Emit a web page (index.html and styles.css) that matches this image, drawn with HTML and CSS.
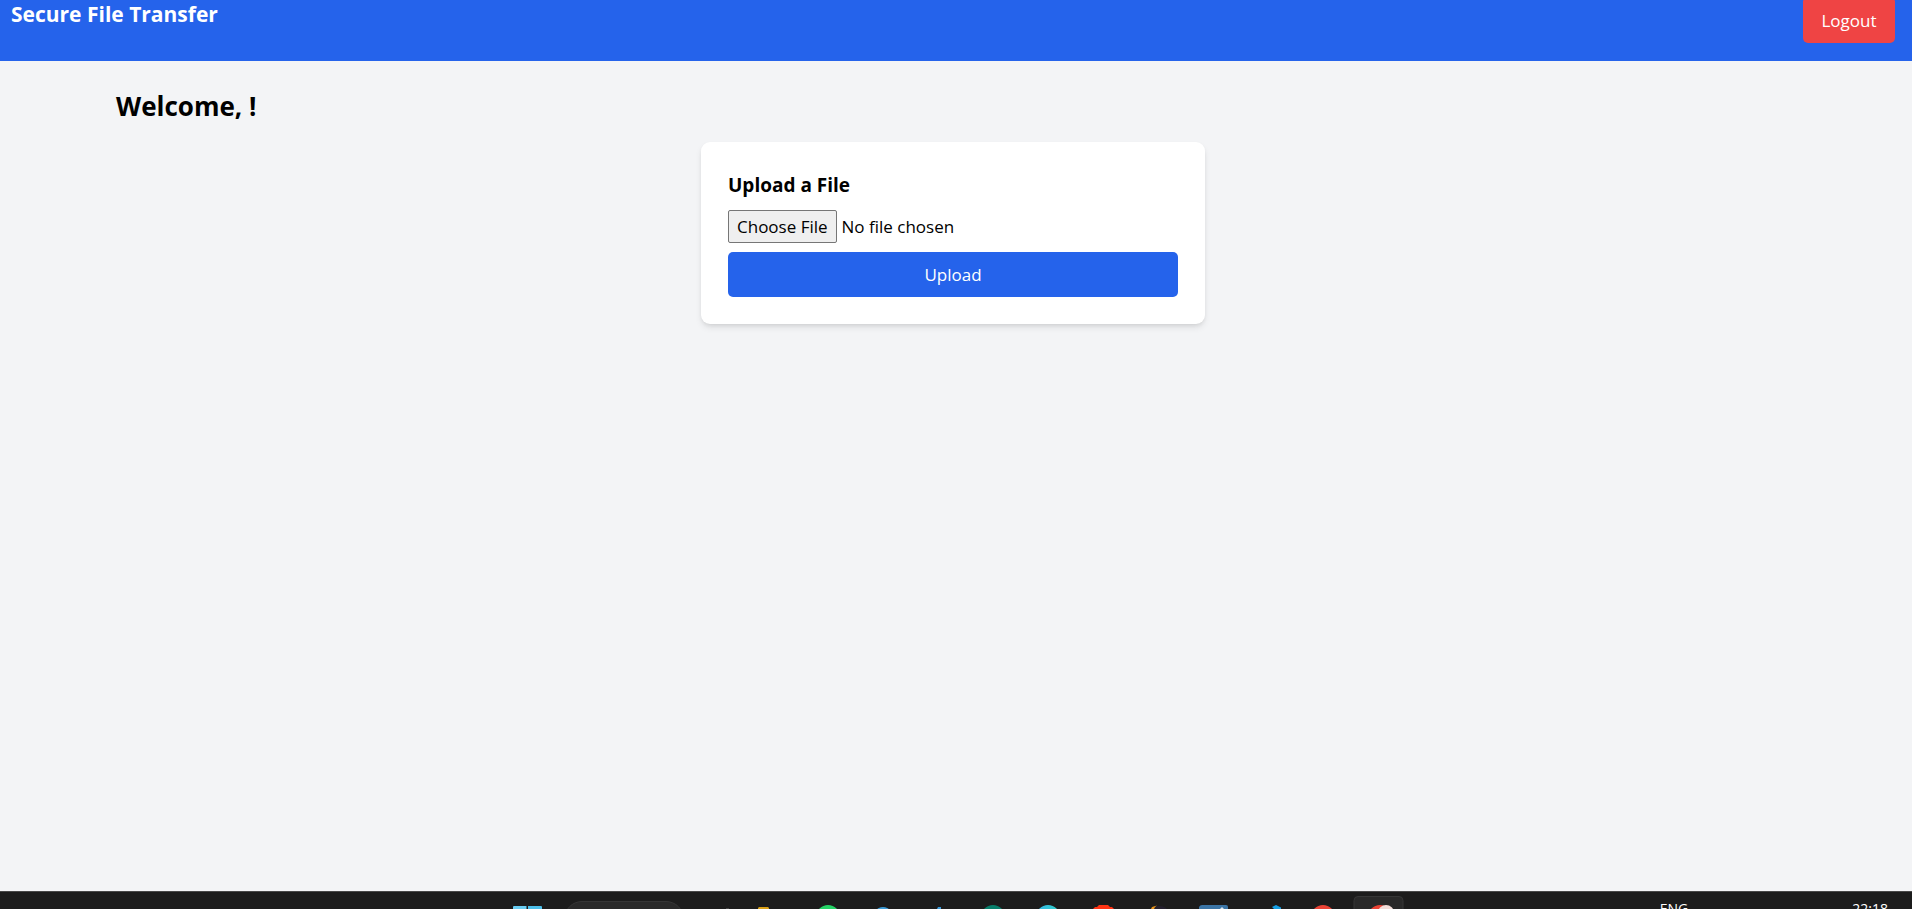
FILE: index.html
```html
<!DOCTYPE html>
<html lang="en">
<head>
<meta charset="utf-8">
<title>Secure File Transfer</title>
<link rel="stylesheet" href="styles.css">
</head>
<body>
<header class="navbar">
  <h1 class="brand">Secure File Transfer</h1>
  <button class="logout" type="button">Logout</button>
</header>
<main class="content">
  <h2 class="welcome">Welcome, !</h2>
  <form class="card">
    <h3 class="card-title" id="upload-title">Upload a File</h3>
    <input class="file" type="file" aria-labelledby="upload-title">
    <button class="upload" type="button">Upload</button>
  </form>
</main>
<footer class="taskbar">
  <div class="apps">
    <button class="app" type="button" aria-label="Start"><svg viewBox="0 0 55 18"><path d="M14 16Q14 15 15 15H27.500V18H14Z" fill="#69cdf2"/><path d="M29 15H42Q43 15 43 16V18H29Z" fill="#4cbfea"/></svg></button>
    <button class="search" type="button" aria-label="Search"></button>
    <button class="app" type="button" aria-label="Task view"><svg viewBox="0 0 55 18"><rect x="35" y="17" width="3" height="1" fill="#444"/></svg></button>
    <button class="app" type="button" aria-label="Files"><svg viewBox="0 0 55 18"><path d="M12 18V17L13 16H22L23 17V18Z" fill="#d9a016"/></svg></button>
    <button class="app" type="button" aria-label="Messages"><svg viewBox="0 0 55 18"><circle cx="27" cy="26" r="12" fill="#25d366"/></svg></button>
    <button class="app" type="button" aria-label="Browser"><svg viewBox="0 0 55 18"><ellipse cx="27" cy="19" rx="6" ry="3" fill="#3c9bd6"/></svg></button>
    <button class="app" type="button" aria-label="Editor"><svg viewBox="0 0 55 18"><path d="M26 18L27 16H30V18Z" fill="#3b9bdc"/></svg></button>
    <button class="app" type="button" aria-label="Development tools"><svg viewBox="0 0 55 18"><circle cx="27" cy="26" r="12" fill="#087f6b"/></svg></button>
    <button class="app" type="button" aria-label="Design"><svg viewBox="0 0 55 18"><defs><linearGradient id="teal"><stop stop-color="#35b6e8"/><stop offset="1" stop-color="#31cfc5"/></linearGradient></defs><circle cx="27" cy="26" r="12" fill="url(#teal)"/></svg></button>
    <button class="app" type="button" aria-label="Private browser"><svg viewBox="0 0 55 18"><path d="M17 18L19 16H21L23 14H32L34 16H36L38 18Z" fill="#ff3414"/></svg></button>
    <button class="app" type="button" aria-label="Development environment"><svg viewBox="0 0 55 18"><ellipse cx="28" cy="19" rx="8" ry="4" fill="#24202e"/><path d="M20 18L21 16L26 14.500L24 16L23 18Z" fill="#e9951b"/></svg></button>
    <button class="app" type="button" aria-label="Database"><svg viewBox="0 0 55 18"><path d="M13 18V16Q14 14 16 14H40Q42 14 42 16V18Z" fill="#3b75a6"/><path d="M34 18L36 16L38 18Z" fill="#d9e5ee"/></svg></button>
    <button class="app" type="button" aria-label="Code"><svg viewBox="0 0 55 18"><path d="M31 16L35 14L40 16.500V18H33Z" fill="#169fe4"/></svg></button>
    <button class="app" type="button" aria-label="Web"><svg viewBox="0 0 55 18"><circle cx="27" cy="26" r="12" fill="#ea4335"/></svg></button>
    <button class="app" type="button" aria-label="Web, active"><svg viewBox="0 0 55 18"><rect x="3" y="5.500" width="49" height="30" rx="4" fill="#292929" stroke="#363636"/><circle cx="29" cy="26" r="12" fill="#ea4335"/><circle cx="35" cy="22" r="8" fill="#f2ddd8"/></svg></button>
  </div>
  <div class="tray"><span>ENG</span><time>22:18</time></div>
</footer>
</body>
</html>
```
FILE: styles.css
```css
* { box-sizing: border-box; }
body {
  margin: 0;
  min-height: 100vh;
  display: flex;
  flex-direction: column;
  background: #f3f4f6;
  color: #000;
  font-family: "Segoe UI", "Open Sans", "Noto Sans", sans-serif;
  font-size: 17px;
  line-height: 27px;
}
h1, h2, h3 { margin: 0; }
button { font: inherit; border: 0; cursor: pointer; }
.navbar {
  display: flex;
  justify-content: space-between;
  align-items: flex-start;
  padding: 0 17px 18px 11px;
  background: #2563eb;
  color: #fff;
}
.brand { font-size: 21px; line-height: 28px; font-weight: 700; }
.logout {
  min-width: 92px;
  padding: 7px 16px 9px;
  border-radius: 1px 1px 5px 5px;
  background: #ef4444;
  color: #fff;
}
.content {
  flex: 1;
  width: 100%;
  max-width: 1734px;
  margin: 0 auto;
  padding: 27px 33px 27px 27px;
}
.welcome { font-size: 26px; line-height: 36px; font-weight: 700; margin-bottom: 18px; }
.card {
  display: flex;
  flex-direction: column;
  gap: 9px;
  max-width: 504px;
  margin: 0 auto;
  padding: 27px;
  border-radius: 9px;
  background: #fff;
  box-shadow: 0 4px 7px -1px rgba(0, 0, 0, .1), 0 2px 5px -2px rgba(0, 0, 0, .1);
}
.card-title { font-size: 19px; line-height: 32px; font-weight: 700; }
.file { width: 100%; font: inherit; }
.file::file-selector-button {
  height: 33px;
  padding: 0 8px;
  margin-right: 5px;
  border: 1px solid #767676;
  border-radius: 2px;
  background: #efefef;
  color: #000;
  font: inherit;
}
.upload {
  padding: 9px 18px;
  border-radius: 5px;
  background: #2563eb;
  color: #fff;
}
.taskbar {
  display: grid;
  grid-template-columns: 1fr auto 1fr;
  height: 18px;
  padding-right: 8px;
  overflow: hidden;
  background: #1c1c1c;
  box-shadow: inset 0 1px #484848;
  color: #fff;
}
.apps { grid-column: 2; display: flex; }
.app { width: 55px; height: 18px; padding: 0; background: none; }
.app svg { display: block; width: 55px; height: 18px; }
.search {
  width: 120px;
  height: 36px;
  margin: 10px 7px 0 10px;
  border: 1px solid #353535;
  border-radius: 18px;
  background: #292929;
}
.tray {
  display: flex;
  justify-content: flex-end;
  gap: 164px;
  padding: 9px 16px 0 0;
  font-size: 14px;
  line-height: 18px;
}
```
